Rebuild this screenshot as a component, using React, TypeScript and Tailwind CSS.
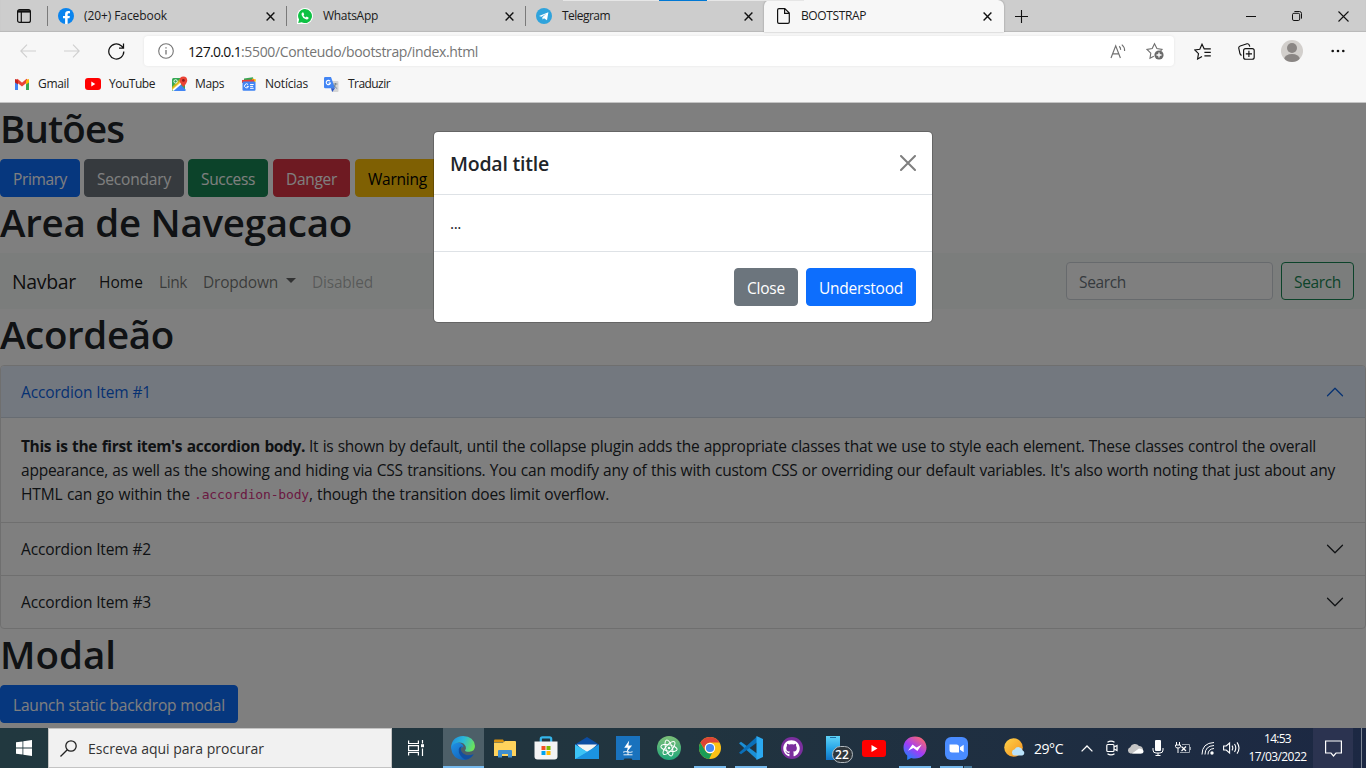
import React, { useLayoutEffect, useRef, useState } from "react";
import { FaGithub, FaFacebookF } from "react-icons/fa";

/* Text run whose tracking is tuned so that it takes up exactly `w` pixels. */
function Fit({ w, children, className = "" }: { w: number; children: string; className?: string }) {
  const ref = useRef<HTMLSpanElement>(null);
  const [spacing, setSpacing] = useState(0);
  useLayoutEffect(() => {
    const el = ref.current;
    if (!el) return;
    el.style.letterSpacing = "0px";
    const natural = el.getBoundingClientRect().width;
    const next = (w - natural) / children.length;
    el.style.letterSpacing = `${next}px`;
    setSpacing(next);
  }, [w, children]);
  return (
    <span ref={ref} className={`inline-block shrink-0 whitespace-pre ${className}`} style={{ letterSpacing: spacing }}>
      {children}
    </span>
  );
}

const CloseX = () => (
  <svg width="9" height="9" viewBox="0 0 9 9" stroke="#111" strokeWidth="1.4" fill="none">
    <path d="M.6 .6 8.4 8.4M8.4 .6 .6 8.4" />
  </svg>
);

const Telegram = () => (
  <svg width="16" height="16" viewBox="0 0 16 16">
    <circle cx="8" cy="8" r="8" fill="#2fa3dc" />
    <path d="M3 8 12.4 4.2 11 12.2 8 10.2 6.6 11.6 6.3 9.2 10.3 5.8 5.4 8.8z" fill="#fff" />
  </svg>
);

function Tab({ icon, title, w }: { icon: React.ReactNode; title: string; w: number }) {
  return (
    <div className="flex h-full w-[239px] items-center pr-[11px]">
      <div className="h-5 w-px bg-[#7a7a7a]" />
      <div className="ml-2.5 flex w-4 justify-center">{icon}</div>
      <Fit w={w} className="ml-2.5">{title}</Fit>
      <div className="grow" />
      <CloseX />
    </div>
  );
}

function TabStrip() {
  return (
    <div className="relative flex h-8 items-center bg-[#cdcdcd] text-[12px] text-[#1a1a1a] shadow-[inset_0_-1px_1px_rgba(0,0,0,0.1)]">
      <div className="flex w-[47px] justify-center pl-px">
        <svg width="14" height="14" viewBox="0 0 14 14" fill="none" stroke="#111">
          <rect x=".6" y=".6" width="12.8" height="12.8" rx="2" strokeWidth="1.2" />
          <path d="M1 2.4h12" strokeWidth="2.4" />
          <path d="M4.3 3v10" strokeWidth="1.2" />
        </svg>
      </div>
      <Tab
        title="(20+) Facebook"
        w={83}
        icon={
          <div className="flex h-4 w-4 items-end justify-center rounded-full bg-[#0a84ee] text-white">
            <FaFacebookF size={13} />
          </div>
        }
      />
      <Tab
        title="WhatsApp"
        w={55}
        icon={
          <div className="flex h-4 w-4 items-center justify-center rounded-full rounded-bl-sm bg-white">
            <svg width="14" height="14" viewBox="0 0 14 14">
              <path d="M7 0a7 7 0 1 1-3.300 13.200L.2 14l.9-3.400A7 7 0 0 1 7 0z" fill="#0fc144" />
              <path d="M4.300 3.600h1.100l.8 1.900-.7.9q.8 1.500 2.300 2.100l.8-1 1.900.9v1q-.8 1.400-2.600.9Q4.600 9.200 3.600 6q-.3-1.500.7-2.400z" fill="#fff" />
            </svg>
          </div>
        }
      />
      <Tab title="Telegram" w={48} icon={<Telegram />} />
      <div className="flex h-full w-[240px] items-center rounded-t-md bg-[#f7f7f7] pr-3 pl-[13px] shadow-[0_0_2px_rgba(0,0,0,0.35)]">
        <svg width="13" height="16" viewBox="0 0 13 16" fill="none" stroke="#111" strokeWidth="1.2">
          <path d="M2 .6h5.800l4.500 4.500V14q0 1.400-1.400 1.400H2Q.6 15.400.6 14V2Q.6.6 2 .6zM7.600.8v4.600h4.600" />
        </svg>
        <Fit w={65} className="ml-[11px]">BOOTSTRAP</Fit>
        <div className="grow" />
        <CloseX />
      </div>
      <div className="flex w-[34px] justify-center">
        <svg width="13" height="13" viewBox="0 0 13 13" stroke="#111" strokeWidth="1.1">
          <path d="M6.500 0v13M0 6.500h13" />
        </svg>
      </div>
      <div className="grow" />
      <div className="flex w-[46px] justify-center">
        <div className="h-px w-2.5 bg-[#111]" />
      </div>
      <div className="flex w-[46px] justify-center">
        <svg width="10" height="10" viewBox="0 0 10 10" fill="none" stroke="#111">
          <rect x=".5" y="2.300" width="7.200" height="7.200" rx="1.400" />
          <path d="M2.400.5h5Q9.500.5 9.500 2.600v5" />
        </svg>
      </div>
      <div className="flex w-[46px] justify-center">
        <svg width="11" height="11" viewBox="0 0 11 11" stroke="#111" strokeWidth="1.1">
          <path d="M.5.5l10 10M10.500.5l-10 10" />
        </svg>
      </div>
      <div className="absolute top-0 left-[563px] h-px w-[241px] bg-[#e6e6e6] pl-24">
        <div className="h-px w-12 bg-[#0078d4]" />
      </div>
    </div>
  );
}

function Toolbar() {
  return (
    <div className="flex h-[38px] items-center pl-1.5">
      <div className="flex w-11 justify-center">
        <svg width="16" height="14" viewBox="0 0 16 14" fill="none" stroke="#cfcfcf" strokeWidth="1.1">
          <path d="M7 .6.8 7 7 13.400M.8 7H16" />
        </svg>
      </div>
      <div className="flex w-11 justify-center">
        <svg width="16" height="14" viewBox="0 0 16 14" fill="none" stroke="#cfcfcf" strokeWidth="1.1">
          <path d="M9 .6 15.200 7 9 13.400M15.200 7H0" />
        </svg>
      </div>
      <div className="flex w-11 justify-center">
        <svg width="17" height="17" viewBox="0 0 17 17" fill="none" stroke="#111" strokeWidth="1.25">
          <path d="M15.800 8.500a7.500 7.500 0 1 1-2.600-5.700L15.200 4.600M15.500.6V5.100H11" />
        </svg>
      </div>
      <div className="ml-1.5 flex h-[30px] w-[1030px] items-center rounded bg-white pl-3.5 text-[14px] shadow-[0_0_3px_rgba(0,0,0,0.08)]">
        <svg width="16" height="16" viewBox="0 0 16 16" fill="none" stroke="#757575" strokeWidth="1.1">
          <circle cx="8" cy="8" r="7.300" />
          <path d="M8 7v4.600M8 4.300v1.300" strokeWidth="1.3" />
        </svg>
        <Fit w={53} className="ml-3.5 text-[#111]">127.0.0.1</Fit>
        <Fit w={237} className="text-[#757575]">:5500/Conteudo/bootstrap/index.html</Fit>
        <div className="grow" />
        <svg width="16" height="15" viewBox="0 0 16 15" fill="none" stroke="#6f6f6f" strokeWidth="1.15">
          <path d="M1 14 5.700 1.800 10.400 14M2.600 9.800h6.200M9.200 2.300q1.600 1.400 1.400 3.600M11.800.6q3 2.400 2.800 6.400" />
        </svg>
        <svg className="mr-[10px] ml-[20px]" width="18" height="18" viewBox="0 0 18 18" fill="none" stroke="#6f6f6f" strokeWidth="1.1">
          <path d="M7.800 14.200 4 16.300l.8-5.200L1 7.400l5.200-.8L8.500 1.800l2.400 4.800 5.100.8-1.400 1.500" />
          <circle cx="13" cy="13" r="4.600" fill="#6b6b6b" stroke="none" />
          <path d="M13 10.500v5M10.500 13h5" stroke="#fff" strokeWidth="1.300" />
        </svg>
      </div>
      <div className="ml-1.5 flex w-11 justify-center">
        <svg width="17" height="17" viewBox="0 0 17 17" fill="none" stroke="#111" strokeWidth="1.15">
          <path d="M8 13.400 3.600 16l.9-5.400L.8 7l5-.8L8 1.200l2.200 4.600h6.600M10.400 9.300h6.400M10.400 12.800h6.400" />
        </svg>
      </div>
      <div className="flex w-[45px] justify-center">
        <svg width="17" height="17" viewBox="0 0 17 17" fill="none" stroke="#111" strokeWidth="1.15">
          <rect x="5.600" y="5.600" width="10.600" height="10.600" rx="2" />
          <path d="M10.900 7.800v6.200M7.800 10.900H14M3.600 12.400Q2.400 12 2 10.800L.8 5.400Q.4 3.600 2.200 3L9 .8q1.600-.4 2.200 1.200l.6 1.600" />
        </svg>
      </div>
      <div className="flex w-[46px] justify-center">
        <svg width="22" height="22" viewBox="0 0 22 22">
          <defs>
            <clipPath id="avatar"><circle cx="11" cy="11" r="11" /></clipPath>
          </defs>
          <circle cx="11" cy="11" r="11" fill="#d2cfcc" />
          <g clipPath="url(#avatar)" fill="#8a8684">
            <circle cx="11" cy="8" r="5" />
            <ellipse cx="11" cy="19" rx="7.800" ry="5" />
          </g>
        </svg>
      </div>
      <div className="flex w-[46px] justify-center">
        <svg width="14" height="4" viewBox="0 0 14 4" fill="#111">
          <circle cx="1.700" cy="2" r="1.300" /><circle cx="7" cy="2" r="1.300" /><circle cx="12.300" cy="2" r="1.300" />
        </svg>
      </div>
    </div>
  );
}

function Bookmarks() {
  return (
    <div className="flex h-8 items-center pb-1 pl-3.5 text-[12px] text-[#222]">
      <svg width="16" height="12" viewBox="0 0 16 12">
        <path d="M1 1.500V12h3V5.500z" fill="#4285f4" />
        <path d="M15 1.500V12h-3V5.500z" fill="#34a853" />
        <path d="M2.500 2 8 6.600 13.500 2" stroke="#ea4335" strokeWidth="3" fill="none" />
        <path d="M12 2.800 14 1q1-.2 1 1v2.400l-3 2.200z" fill="#fbbc04" />
        <path d="M4 2.800 2 1Q1 .8 1 2v2.400l3 2.200z" fill="#c5221f" />
      </svg>
      <Fit w={31} className="ml-2">Gmail</Fit>
      <svg className="ml-4" width="16" height="12" viewBox="0 0 16 12">
        <rect width="16" height="12" rx="3" fill="#f00" />
        <path d="M6.300 3.500v5l4-2.500z" fill="#fff" />
      </svg>
      <Fit w={46} className="ml-2">YouTube</Fit>
      <svg className="ml-[17px]" width="16" height="16" viewBox="0 0 16 16">
        <rect x="0" y="2" width="13" height="13" rx="1.500" fill="#34a853" />
        <path d="M1 15 8 8l6 6-1 1z" fill="#4285f4" />
        <path d="M0 13 11 3l2 2L1.500 15z" fill="#fff" />
        <path d="M0 11 9 2h4v1L0 14z" fill="#fbbc04" opacity=".75" />
        <circle cx="3.600" cy="5.400" r="1.700" fill="none" stroke="#fff" strokeWidth=".9" />
        <path d="M11.400 11Q7.600 6.800 7.600 4.400a3.800 3.800 0 0 1 7.600 0Q15.200 6.800 11.400 11z" fill="#ea4335" />
        <circle cx="11.400" cy="4.400" r="1.400" fill="#8c1d18" />
      </svg>
      <Fit w={29} className="ml-[7px]">Maps</Fit>
      <svg className="ml-[17px]" width="16" height="14" viewBox="0 0 16 14">
        <path d="M3 1.500 12 .3l.5 4H3z" fill="#34a853" />
        <path d="M11 1.500l4 1-1 3.500h-3z" fill="#fbbc04" />
        <path d="M1 3l12-.5V6H1z" fill="#ea4335" />
        <rect x="1.500" y="4.500" width="13" height="9.300" rx="1" fill="#4285f4" />
        <path d="M7.100 7.600A2 2 0 1 0 7.500 9.400H5.700M9.100 7.500h3.600M9.100 9.400h3M9.100 11.300h3.600" stroke="#fff" fill="none" />
      </svg>
      <Fit w={43} className="ml-2">Notícias</Fit>
      <svg className="ml-4" width="15" height="15" viewBox="0 0 15 15">
        <path d="M5 4h8.500q1 0 1 1v9q0 1-1 1H8z" fill="#d5d5d5" />
        <path d="M1.200 0H7l4 11.300H1.200Q0 11.300 0 10V1.200Q0 0 1.200 0z" fill="#4285f4" />
        <path d="M7 11.300h4L8.200 15z" fill="#2a56c6" />
        <path d="M6 4.200A2.100 2.100 0 1 0 6.400 6H4.500" stroke="#fff" strokeWidth="1.1" fill="none" />
        <path d="M9.400 7h4M11.500 6v1q-.3 2.600-2 3.600M10 8q1 2.600 3.200 3.600" stroke="#6b7c8c" strokeWidth=".8" fill="none" />
      </svg>
      <Fit w={42} className="ml-[9px]">Traduzir</Fit>
    </div>
  );
}

const H1 = ({ w, children }: { w: number; children: string }) => (
  <h1 className="mb-2 h-12 pt-0.5 text-[38.500px] leading-[46px] font-semibold text-[#212529]">
    <Fit w={w}>{children}</Fit>
  </h1>
);

const Btn = ({ w, className, children }: { w: number; className: string; children: string }) => (
  <button className={`h-[38px] shrink-0 rounded border px-3 pt-px text-[15.500px] leading-6 ${className}`}>
    <Fit w={w}>{children}</Fit>
  </button>
);

const Chevron = ({ up = false }: { up?: boolean }) => (
  <svg
    width="20" height="20" viewBox="0 0 16 16" fill="none" strokeLinecap="round" strokeLinejoin="round"
    className={up ? "rotate-180 stroke-[#0c63e4]" : "stroke-[#212529]"}
  >
    <path d="M2 5l6 6 6-6" />
  </svg>
);

function AccordionHead({ n }: { n: number }) {
  return (
    <div className="flex h-[53px] items-center justify-between border-t border-[#dfdfdf] px-5 text-[#212529]">
      <Fit w={130}>{`Accordion Item #${n}`}</Fit>
      <Chevron />
    </div>
  );
}

function PageBody() {
  return (
    <div className="text-[15.500px] leading-6 text-[#212529]">
      <H1 w={124}>Butões</H1>
      <div className="flex">
        <Btn w={54} className="border-[#0d6efd] bg-[#0d6efd] text-white">Primary</Btn>
        <Btn w={74} className="ml-1 border-[#6c757d] bg-[#6c757d] text-white">Secondary</Btn>
        <Btn w={54} className="ml-1 border-[#198754] bg-[#198754] text-white">Success</Btn>
        <Btn w={51} className="ml-[5px] border-[#dc3545] bg-[#dc3545] text-white">Danger</Btn>
        <Btn w={59} className="ml-[5px] border-[#ffc107] bg-[#ffc107] text-black">Warning</Btn>
      </div>
      <H1 w={352}>Area de Navegacao</H1>
      <nav className="flex h-14 items-center bg-[#f7fbf9] px-3">
        <Fit w={64} className="mr-[23px] pt-px text-[19.500px] text-black/90">Navbar</Fit>
        <Fit w={44} className="pt-px text-black/90">Home</Fit>
        <Fit w={28} className="ml-4 pt-px text-black/55">Link</Fit>
        <Fit w={75} className="ml-4 pt-px text-black/55">Dropdown</Fit>
        <div className="mt-[-2px] ml-2 border-x-[5px] border-t-[5px] border-x-transparent border-t-black/60" />
        <Fit w={61} className="ml-4 pt-px text-black/30">Disabled</Fit>
        <div className="grow" />
        <div className="mr-2 flex h-[38px] w-[207px] items-center rounded border border-[#ced4da] bg-white px-3 text-[#6c757d]">
          <Fit w={47} className="pt-px">Search</Fit>
        </div>
        <Btn w={47} className="border-[#198754] text-[#198754]">Search</Btn>
      </nav>
      <H1 w={174}>Acordeão</H1>
      <div className="h-[264px] rounded border border-[#dfdfdf]">
        <div className="flex h-[52px] items-center justify-between rounded-t-[3px] border-b border-[#cfd9e5] bg-[#e7f1ff] px-5 text-[#0c63e4]">
          <Fit w={130} className="pt-px">Accordion Item #1</Fit>
          <Chevron up />
        </div>
        <div className="h-[104px] px-5 pt-4">
          <div className="flex h-6">
            <Fit w={284} className="font-bold [word-spacing:1px]">This is the first item's accordion body.</Fit>
            <Fit w={1007} className="ml-1 [word-spacing:0.500px]">It is shown by default, until the collapse plugin adds the appropriate classes that we use to style each element. These classes control the overall</Fit>
          </div>
          <div className="flex h-6">
            <Fit w={1314} className="[word-spacing:0.500px]">appearance, as well as the showing and hiding via CSS transitions. You can modify any of this with custom CSS or overriding our default variables. It's also worth noting that just about any</Fit>
          </div>
          <div className="flex h-6">
            <Fit w={169} className="[word-spacing:0.500px]">HTML can go within the</Fit>
            <Fit w={115} className="ml-1 pt-px font-['DejaVu_Sans_Mono',monospace] text-[13px] text-[#d63384]">.accordion-body</Fit>
            <Fit w={300} className="[word-spacing:0.500px]">, though the transition does limit overflow.</Fit>
          </div>
        </div>
        <AccordionHead n={2} />
        <AccordionHead n={3} />
      </div>
      <H1 w={116}>Modal</H1>
      <Btn w={212} className="border-[#0d6efd] bg-[#0d6efd] text-white">Launch static backdrop modal</Btn>
    </div>
  );
}

function Modal() {
  return (
    <div className="absolute top-7 left-[433px] w-[500px] rounded-[5px] border border-black/20 bg-white bg-clip-padding text-[15.500px] text-[#212529]">
      <div className="flex h-[63px] items-center justify-between border-b border-[#dee2e6] px-4">
        <Fit w={99} className="pt-px text-[19.500px] font-semibold">Modal title</Fit>
        <svg width="16" height="16" viewBox="0 0 16 16" stroke="#7f7f7f" strokeWidth="2" strokeLinecap="round">
          <path d="M1 1l14 14M15 1 1 15" />
        </svg>
      </div>
      <div className="h-14 p-4 leading-6"><Fit w={11}>...</Fit></div>
      <div className="flex h-[71px] items-center justify-end gap-2 border-t border-[#dee2e6] px-4">
        <Btn w={38} className="border-[#6c757d] bg-[#6c757d] text-white">Close</Btn>
        <Btn w={84} className="border-[#0d6efd] bg-[#0d6efd] text-white">Understood</Btn>
      </div>
    </div>
  );
}

function AppSlot({ children, bar, active = false }: { children: React.ReactNode; bar?: React.ReactNode; active?: boolean }) {
  return (
    <div className={`flex h-10 w-[41px] shrink-0 flex-col items-center ${active ? "bg-[#4d5f68]" : ""}`}>
      <div className="flex h-[38px] items-center justify-center pt-0.5">{children}</div>
      {bar}
    </div>
  );
}
const Bar = () => <div className="h-0.5 w-8 bg-[#76b9ed]" />;

function TaskbarApps() {
  return (
    <>
      <AppSlot active bar={<div className="h-0.5 w-full bg-[#76b9ed]" />}>
        <svg className="-ml-0.5" width="24" height="24" viewBox="0 0 24 24">
          <defs>
            <linearGradient id="edgeTop" x1="0" y1=".2" x2="1" y2=".5">
              <stop offset="0" stopColor="#1e8fe0" /><stop offset=".5" stopColor="#2cb9d8" /><stop offset="1" stopColor="#6be25a" />
            </linearGradient>
            <linearGradient id="edgeLow" x1="0" y1="0" x2="1" y2="1">
              <stop offset="0" stopColor="#1f92e6" /><stop offset="1" stopColor="#0f56ae" />
            </linearGradient>
          </defs>
          <path d="M0 12Q1 5.500 7.500 6.500 12.500 7.500 12.500 11 9.400 11 9.800 14.800q1.600 5 7.200 4.800 3-.2 5.600-1.400Q18.600 24.200 12 24 1.400 23 0 12z" fill="url(#edgeLow)" />
          <path d="M7.800 13q-.6 5.600 4.200 9.300 1.400 1.200 3 1.300Q20 22.500 22.600 18.200q-4.600 2-8.600.2Q9.400 16.400 9.900 12.600q.3-1.600 1.600-2Q8.600 10.200 7.800 13z" fill="#134f9f" />
          <path d="M0 12Q.6 .6 12 0q11 .4 12 10 0 5.600-5.800 5.800-4.200 0-4.200-1.400 1.400-1.600.8-3.600Q13.400 6.400 8 6.400 1.800 6.800 0 12z" fill="url(#edgeTop)" />
        </svg>
      </AppSlot>
      <AppSlot>
        <svg width="22" height="19" viewBox="0 0 22 19">
          <path d="M0 1.500Q0 0.500 1 .5h8l1.500 2.500H0z" fill="#d9920f" />
          <path d="M0 3.500h9L11 2h10q1 0 1 1v14H0z" fill="#ffd35c" />
          <path d="M4 18.600V12q0-1 1-1h12q1 0 1 1v6.600h-4V15H8v3.600z" fill="#3f8fd0" />
        </svg>
      </AppSlot>
      <AppSlot>
        <svg width="24" height="24" viewBox="0 0 24 24">
          <path d="M6.800 6V3q0-1.600 1.600-1.600h7.200Q17.200 1.400 17.200 3v3" fill="none" stroke="#35b5ea" strokeWidth="2.200" />
          <path d="M.5 5.600h23v15q0 3-3 3h-17q-3 0-3-3z" fill="#f4f4f4" />
          <path d="M7.500 10H11.500v4H7.500z" fill="#f25022" /><path d="M12.500 10h4v4h-4z" fill="#7fba00" />
          <path d="M7.500 15h4v4h-4z" fill="#00a4ef" /><path d="M12.500 15h4v4h-4z" fill="#ffb900" />
        </svg>
      </AppSlot>
      <AppSlot>
        <svg width="24" height="22" viewBox="0 0 24 22">
          <path d="M0 7.500 12 0l12 7.500V10H0z" fill="#0c4da2" />
          <path d="M2 7.500h20L12 17z" fill="#f4f4f4" />
          <path d="M0 7.500 24 22H0z" fill="#2db4f0" /><path d="M24 7.500V22H0z" fill="#1b93e0" />
          <path d="M0 7.500 12 15 0 22z" fill="#3cc3f5" />
        </svg>
      </AppSlot>
      <AppSlot>
        <svg width="24" height="24" viewBox="0 0 24 24">
          <path d="M0 0h24v24h-7.500l-1-1.500h-7L7.500 24H0z" fill="#1972bd" />
          <path d="M13.200 4.600 8.200 11.800h3.600l-1.300 4.600 5.600-6.800h-3.700z" fill="#fff" />
          <path d="M7 16.200q2.500-1.200 5-.2 2 .8 4.600-.2M7.500 18.800h9M12 15v4" stroke="#fff" strokeWidth=".9" fill="none" />
        </svg>
      </AppSlot>
      <AppSlot>
        <svg className="ml-px" width="24" height="24" viewBox="0 0 24 24" fill="none" stroke="#fff" strokeWidth="1">
          <defs><linearGradient id="atomBg" x1="0" y1="0" x2="0" y2="1"><stop offset="0" stopColor="#7cbf78" /><stop offset="1" stopColor="#1fa67a" /></linearGradient></defs>
          <circle cx="12" cy="12" r="12" fill="url(#atomBg)" stroke="none" />
          <ellipse cx="12" cy="12" rx="8.300" ry="3.200" transform="rotate(12 12 12)" />
          <ellipse cx="12" cy="12" rx="8.300" ry="3.200" transform="rotate(72 12 12)" />
          <ellipse cx="12" cy="12" rx="8.300" ry="3.200" transform="rotate(132 12 12)" />
          <circle cx="12" cy="12" r="1.300" fill="#fff" stroke="none" />
        </svg>
      </AppSlot>
      <AppSlot bar={<Bar />}>
        <svg width="22" height="22" viewBox="0 0 22 22">
          <circle cx="11" cy="11" r="11" fill="#fbc116" />
          <path d="M1.470 5.500A11 11 0 0 1 20.530 5.500H11A5.500 5.500 0 0 0 6.200 8.200z" fill="#dc4437" />
          <path d="M1.470 5.500 6.240 13.750A5.500 5.500 0 0 0 13 16.100L10.200 22A11 11 0 0 1 1.470 5.500z" fill="#1a9c57" />
          <path d="M1.470 5.500 6.240 13.750 5.500 11Q5.600 7 9 5.800L11 5.500z" fill="#dc4437" />
          <circle cx="11" cy="11" r="5.200" fill="#fff" /><circle cx="11" cy="11" r="4.100" fill="#4688f4" />
        </svg>
      </AppSlot>
      <AppSlot bar={<Bar />}>
        <svg width="24" height="24" viewBox="0 0 24 24">
          <path d="M0 7.300 2 5.700 18 17.500V23.500z" fill="#1b8fd6" />
          <path d="M0 16.700 18 .5V6.500L2 18.300z" fill="#0a6fb8" />
          <path d="M17.500 0 24 3v18l-6.500 3z" fill="#2ba9f1" />
        </svg>
      </AppSlot>
      <AppSlot>
        <div className="flex h-[22px] w-[22px] items-center justify-center rounded-full bg-[#7b2f9e] text-white">
          <FaGithub size={17} />
        </div>
      </AppSlot>
      <AppSlot>
        <div className="relative h-6 w-3.5 bg-gradient-to-b from-[#5fd3f7] via-[#28a8e8] to-[#1173c5]">
          <div className="mx-auto mt-px h-px w-1.5 bg-[#1c6ea5]" />
          <div className="absolute top-[10px] left-1.5 flex h-[17px] w-[21px] items-center justify-center rounded-full border border-[#b3bbc0] bg-[#30373c] text-[12px] font-semibold text-white">
            <Fit w={14}>22</Fit>
          </div>
        </div>
      </AppSlot>
      <AppSlot>
        <svg className="ml-px" width="24" height="17" viewBox="0 0 24 17">
          <rect width="24" height="17" rx="3" fill="#f00" /><path d="M9.500 5v7l6-3.500z" fill="#fff" />
        </svg>
      </AppSlot>
      <AppSlot bar={<Bar />}>
        <svg width="24" height="24" viewBox="0 0 24 24">
          <defs>
            <linearGradient id="msg" x1=".1" y1="1" x2=".8" y2="0">
              <stop offset="0" stopColor="#0a8bff" /><stop offset=".5" stopColor="#a13cf5" /><stop offset="1" stopColor="#ff6968" />
            </linearGradient>
          </defs>
          <path d="M12 .5C5.300.5.5 5.300.5 11.500c0 3.400 1.400 6.200 3.700 8.100V24l4-2q1.800.5 3.800.5c6.700 0 11.500-4.800 11.500-11S18.700.5 12 .5z" fill="url(#msg)" />
          <path d="M5 14.700 9.500 8.500l4 3L18.800 8.400 14.400 14.900l-4-3z" fill="#fff" />
        </svg>
      </AppSlot>
      <AppSlot bar={<div className="flex h-0.5 w-8"><div className="w-[23px] bg-[#76b9ed]" /><div className="ml-px w-2 bg-[#47799c]" /></div>}>
        <svg className="ml-px" width="23" height="23" viewBox="0 0 23 23">
          <rect width="23" height="23" rx="6" fill="#4a8cff" />
          <path d="M4.500 7.500h7q2.500 0 2.500 2.500v5.500H7q-2.500 0-2.500-2.500z M15 10.300l3.700-2.600v7.600L15 12.700z" fill="#fff" />
        </svg>
      </AppSlot>
    </>
  );
}

function Tray() {
  return (
    <div className="flex h-full items-center text-white">
      <svg width="21" height="20" viewBox="0 0 21 20">
        <defs><linearGradient id="sun" x1="0" y1="0" x2="1" y2="1"><stop offset="0" stopColor="#fdd24a" /><stop offset="1" stopColor="#f5901e" /></linearGradient></defs>
        <circle cx="9.500" cy="9.500" r="9.300" fill="url(#sun)" />
        <path d="M10.500 17.500a3.200 3.200 0 0 1 .2-6.300 4.400 4.400 0 0 1 8 1.200 2.700 2.700 0 0 1-.5 5.100z" fill="#b9e2fa" />
      </svg>
      <Fit w={29} className="ml-[9px] text-[14px]">29°C</Fit>
      <svg className="ml-[18px]" width="12" height="7" viewBox="0 0 12 7" fill="none" stroke="#fff" strokeWidth="1.300"><path d="M.6 6.400 6 1l5.400 5.400" /></svg>
      <svg className="ml-[13px]" width="12" height="16" viewBox="0 0 12 16" fill="none" stroke="#fff" strokeWidth="1.200">
        <rect x=".8" y="4.500" width="7.200" height="7" rx="1" /><path d="M8 7l3-1.600v5.200L8 9M1.500 2.200Q5 0 8.500 2.200M1.500 13.800q3.500 2.200 7 0" />
      </svg>
      <svg className="ml-[9px]" width="17" height="11" viewBox="0 0 17 11">
        <path d="M3.500 10.500a3.200 3.200 0 0 1-.3-6.200A5 5 0 0 1 12 3a4 4 0 0 1 2 7.500z" fill="#c4c4c4" />
        <path d="M5 10.500 12 5.500q5 .5 4.500 3.500-.5 1.500-2.500 1.500z" fill="#fff" />
      </svg>
      <svg className="ml-[8px]" width="12" height="16" viewBox="0 0 12 16" fill="none" stroke="#fff">
        <rect x="3" y="0" width="6" height="11" rx="1" fill="#fff" stroke="none" /><path d="M1 8v2q0 3 3 3h4q3 0 3-3V8M6 13v2.500M3.500 15.500h5" />
      </svg>
      <svg className="ml-[11px]" width="17" height="12" viewBox="0 0 17 12" fill="none" stroke="#fff">
        <path d="M1.500 0v3M4.500 0v3M.5 3h5v1.500Q5.500 6 3 6 .5 6 .5 4.500zM3 6v5" />
        <path d="M7 2.500h7.500v8H5M15.500 5v3" stroke="#9aa2ad" /><path d="M6.500 4.500l4.500 4.500M11 4.500 6.500 9" strokeWidth="1.200" />
      </svg>
      <svg className="ml-[9px]" width="14" height="14" viewBox="0 0 14 14" fill="none" stroke="#fff">
        <path d="M1 13.500Q1 2 13 1.500M4 13.500Q4 5 13 4.500M7 13.500Q7 8 13 7.500" strokeWidth="1" /><circle cx="11" cy="12" r="1.700" fill="#fff" stroke="none" />
      </svg>
      <svg className="ml-[8px]" width="17" height="14" viewBox="0 0 17 14" fill="none" stroke="#fff" strokeWidth="1.100">
        <path d="M.6 5v4h2.600L6.600 12V2L3.200 5zM9 4.600q1.600 2.400 0 4.800M11.500 3q2.600 4 0 8M14 1.400q4 5.600 0 11.200" />
      </svg>
      <div className="ml-[8px] flex w-[59px] flex-col items-center text-[12px] leading-[18px]">
        <Fit w={27}>14:53</Fit>
        <Fit w={58}>17/03/2022</Fit>
      </div>
      <div className="ml-[6px] flex h-full w-10 items-center justify-center bg-[#2b3350]">
        <svg width="17" height="17" viewBox="0 0 17 17" fill="none" stroke="#fff" strokeWidth="1.200"><path d="M.6 1h15.800v12H11l-2.500 3L6 13H.6z" /></svg>
      </div>
      <div className="mr-1 ml-2 h-full w-px bg-[#7e8795]" />
    </div>
  );
}

function Taskbar() {
  return (
    <div className="flex h-10 items-center bg-gradient-to-r from-[#21383f] via-[#21343f] to-[#1c2843]">
      <div className="flex w-12 justify-center">
        <svg width="16" height="16" viewBox="0 0 16 16" fill="#fff">
          <path d="M0 2.300 6.500 1.400V7.500H0zM7.300 1.200 16 0v7.500H7.300zM0 8.400h6.500v6.200L0 13.700zM7.300 8.400H16V16l-8.700-1.200z" />
        </svg>
      </div>
      <div className="flex h-10 w-[344px] items-center border border-[#c3c3c3] bg-[#f1f1f1] pl-[11px] text-[14px] text-[#333]">
        <svg width="17" height="17" viewBox="0 0 17 17" fill="none" stroke="#222" strokeWidth="1.300">
          <circle cx="11" cy="6" r="5.200" /><path d="M7.300 9.700.5 16.500" />
        </svg>
        <Fit w={176} className="ml-[11px]">Escreva aqui para procurar</Fit>
      </div>
      <div className="flex w-[51px] pl-4">
        <svg width="17" height="16" viewBox="0 0 17 16" fill="none" stroke="#fff" strokeWidth="1.200">
          <path d="M.6.5v3h9.800v-3M.6 15.500v-3h9.800v3M.6 5.600h9.800v5H.6zM14.500 0v3.500M14.500 8.500V16" />
          <path d="M13 4.200h3v3h-3z" fill="#fff" stroke="none" />
        </svg>
      </div>
      <TaskbarApps />
      <div className="grow" />
      <Tray />
    </div>
  );
}

export default function App() {
  return (
    <div className="flex h-[768px] w-[1366px] flex-col overflow-hidden font-['Open_Sans','Noto_Sans',sans-serif]">
      <div className="h-[103px] border-b border-[#c4c4c4] bg-[#f7f7f7]">
        <TabStrip />
        <Toolbar />
        <Bookmarks />
      </div>
      <div className="relative h-[625px] overflow-hidden bg-white">
        <PageBody />
        <div className="absolute inset-0 bg-black/50" />
        <Modal />
      </div>
      <Taskbar />
    </div>
  );
}
